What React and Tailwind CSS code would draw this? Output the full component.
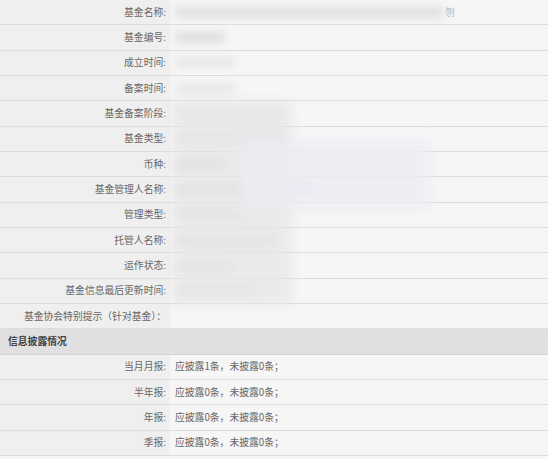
const rows = [
  ['基金名称:', 'w-[268px] bg-[#d6d6d6]', '刎'],
  ['基金编号:', 'w-[50px] bg-[#d4d4d4]'],
  ['成立时间:', 'w-[60px] bg-[#e2e2e2]'],
  ['备案时间:', 'w-[60px] bg-[#e2e2e2]'],
  ['基金备案阶段:', 'w-[110px] bg-[#e4e4e4]'],
  ['基金类型:', 'w-[110px] bg-[#e2e2e2]'],
  ['币种:', 'w-[50px] bg-[#d0d0d8]'],
  ['基金管理人名称:', 'w-[140px] bg-[#d8d8e0]'],
  ['管理类型:', 'w-[70px] bg-[#dedede]'],
  ['托管人名称:', 'w-[100px] bg-[#dcdce6]'],
  ['运作状态:', 'w-[60px] bg-[#dedede]'],
  ['基金信息最后更新时间:', 'w-[80px] bg-[#e0e0e0]'],
  ['基金协会特别提示（针对基金）：'],
];

const reports = [
  ['当月月报:', '应披露1条，未披露0条；'],
  ['半年报:', '应披露0条，未披露0条；'],
  ['年报:', '应披露0条，未披露0条；'],
  ['季报:', '应披露0条，未披露0条；'],
];

function Row({ label, children }) {
  return (
    <div className="flex h-[25.33px] border-b border-[#dcdcdc]">
      <div className="w-[170px] shrink-0 bg-[#efefef] flex items-center justify-end pr-[4px]">
        {label}
      </div>
      <div className="flex-1 bg-[#f6f6f6] flex items-center pl-[5px] gap-[2px]">{children}</div>
    </div>
  );
}

export default function App() {
  return (
    <div
      className="relative w-[548px] h-[459px] overflow-hidden bg-[#f6f6f6] text-[9.8px] text-[#666]"
      style={{ fontFamily: '"Microsoft YaHei", "Noto Sans CJK SC", sans-serif' }}
    >
      {rows.map(([label, blur, tail]) => (
        <Row key={label} label={label}>
          {blur && <span className={`h-[11px] blur-[4px] opacity-70 ${blur}`} />}
          {tail && <span className="text-[#bbb]">{tail}</span>}
        </Row>
      ))}
      <div className="h-[25.33px] border-b border-[#d4d4d4] bg-[#e0e0e0] flex items-center pl-[8px] font-bold text-[#444]">
        信息披露情况
      </div>
      {reports.map(([l, v]) => (
        <Row key={l} label={l}>
          {v}
        </Row>
      ))}

      {/* large smudges of the redaction, lying over the rows */}
      <div className="pointer-events-none absolute left-[172px] top-[100px] w-[120px] h-[205px] bg-[#e6e6e6] blur-[6px] opacity-70" />
      <div className="pointer-events-none absolute left-[240px] top-[140px] w-[190px] h-[70px] bg-[#ececf4] blur-[6px] opacity-80" />
    </div>
  );
}
